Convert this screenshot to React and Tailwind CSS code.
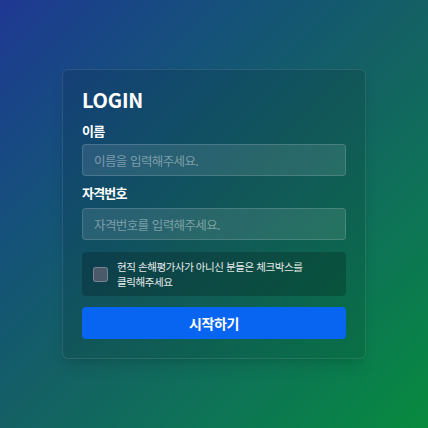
export default function App() {
  return (
    <div
      className="flex h-[428px] w-[428px] items-center justify-center bg-gradient-to-br from-[#1f3793] via-[#146064] to-[#078a3c]"
      style={{ fontFamily: '"Noto Sans CJK KR", "Noto Sans", sans-serif' }}
    >
      <div className="flex w-[304px] flex-col rounded-md border border-white/10 bg-black/10 px-[19px] pt-4 pb-[19px] shadow-lg">
        <h1 className="text-[20px] font-bold leading-[28px] tracking-[-0.01em] text-white">LOGIN</h1>

        <label className="mt-[7px] text-[13px] font-semibold leading-5 tracking-[-0.06em] text-white">이름</label>
        <input
          className="mt-[3px] h-8 w-full rounded border border-white/15 bg-white/10 px-[11px] text-[12.5px] tracking-[-0.05em] [word-spacing:0.1em] text-white outline-none placeholder:text-white/40"
          placeholder="이름을 입력해주세요."
        />

        <label className="mt-[7px] text-[13px] font-semibold leading-5 tracking-[-0.06em] text-white">자격번호</label>
        <input
          className="mt-[5px] h-8 w-full rounded border border-white/15 bg-white/10 px-[11px] text-[12.5px] tracking-[-0.05em] [word-spacing:0.1em] text-white outline-none placeholder:text-white/40"
          placeholder="자격번호를 입력해주세요."
        />

        <div className="mt-3 flex h-11 items-center gap-[9px] rounded bg-black/20 px-[11px]">
          <span className="h-[15px] w-[15px] shrink-0 rounded-[3px] border border-white/25 bg-[#4a5a6a]"></span>
          <p className="text-[10.5px] leading-[15px] tracking-[-0.04em] [word-spacing:0.05em] text-white/90">
            현직 손해평가사가 아니신 분들은 체크박스를
            <br />
            클릭해주세요
          </p>
        </div>

        <button className="mt-[11px] h-8 w-full rounded bg-[#0865f2] text-[14px] font-bold tracking-[-0.03em] text-white">
          시작하기
        </button>
      </div>
    </div>
  );
}
